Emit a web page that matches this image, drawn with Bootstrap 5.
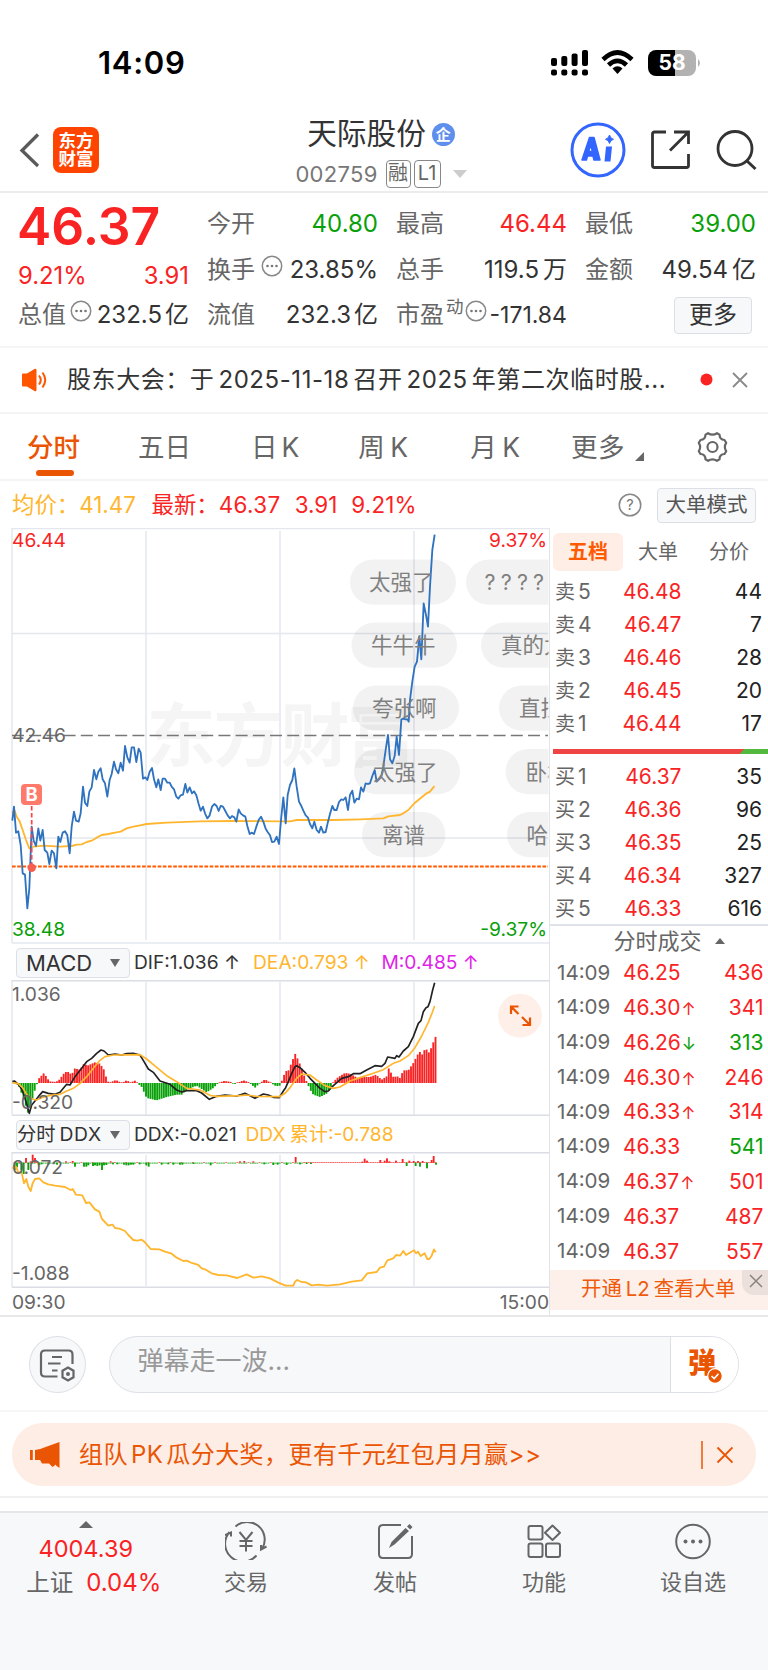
<!DOCTYPE html>
<html lang="zh-CN">
<head>
<meta charset="utf-8">
<meta name="viewport" content="width=device-width, initial-scale=1">
<title>天际股份 002759</title>
<link href="https://cdn.jsdelivr.net/npm/bootstrap@5.3.0/dist/css/bootstrap.min.css" rel="stylesheet">
<style>
:root{--up:#fa2323;--down:#09a009;--brand:#ea5504;--ink:#333;--dim:#666;--avg:#ffb62e}
body{font-family:Inter,"Noto Sans CJK SC",sans-serif;color:var(--ink);background:#fff;font-size:24px;line-height:1;width:768px;overflow-x:hidden}
svg{display:block;flex:none}
.up{color:var(--up)}.down{color:var(--down)}.dim{color:var(--dim)}.brand{color:var(--brand)}.avg{color:var(--avg)}
.statusbar{height:105px;padding:20px 67px 0 98px}
.clock{font-size:31px;font-weight:600;letter-spacing:.7px;color:#000}
.wifi{margin:0 14px 0 12px}
.batt{width:48px;height:26px;border-radius:8px;background:linear-gradient(90deg,#000 27px,#b2b2b2 27px);color:#fff;font-size:21px;font-weight:700;line-height:26px;text-align:center}
.topnav{height:88px;border-bottom:2px solid #ececee;display:grid;grid-template-columns:288px 186px 1fr;align-items:center}
.logo{width:46px;height:46px;border-radius:8px;background:#ff4400;color:#fff;font-weight:700;font-size:17.5px;line-height:18px;text-align:center;padding-top:5px;margin-left:13px}
.title-col{padding-top:9px}
.title-col>div{height:40px}
.stock-name{font-size:29.7px}
.corp{width:23px;height:23px;border-radius:50%;background:#5f8fec;color:#fff;font-size:15px;font-weight:700;line-height:23px;text-align:center;margin-left:6px}
.code{font-size:22px;color:#777;letter-spacing:.3px}
.tagbox{border:1.5px solid #888;border-radius:4px;height:28px;line-height:25px;font-size:20px;text-align:center;color:#666}
.quote{height:155px;border-bottom:2px solid #f5f5f7;padding:.5px 12px 0 18px;display:grid;grid-template-columns:repeat(4,171px);column-gap:18px}
.qcol{padding-top:7.5px}
.qrow{height:45.7px;display:flex;align-items:center;justify-content:space-between;white-space:nowrap}
.bigprice{font-size:51.5px;font-weight:600;height:64px;line-height:64px;margin-left:-1px}
.morebtn{width:78px;height:37px;border:1.5px solid #dcdfe6;border-radius:4px;background:#f7f8fa;font-size:24px;line-height:34px;text-align:center}
.notice{height:66px;border-bottom:2px solid #f4f4f6;padding:0 20px 0 22px}
.chart-tabs{height:67px;border-bottom:2px solid #f4f4f6;font-size:26.5px;color:var(--dim);padding:1px 40px 0 27px}
.chart-tabs .on{color:var(--brand);font-weight:500;position:relative}
.chart-tabs .on::after{content:"";position:absolute;left:9px;width:38px;height:6px;border-radius:3px;background:var(--brand);top:36px}
.avgrow{height:47px;font-size:22.4px;padding:1px 12px 0;white-space:nowrap}
.modebtn{width:99px;height:35px;border:1.5px solid #dcdfe6;border-radius:4px;background:#f7f8fa;font-size:20.5px;line-height:32px;text-align:center;color:#555}
.left{width:549px}.right{width:219px;border-left:1.5px solid #e2e4ea;height:787px}
.board{height:787px}
.indbar{height:36px;padding:1.5px 0 0 16px;font-size:19.2px;white-space:nowrap}
.selbtn{width:114px;height:30px;border:1.5px solid #dcdfe6;border-radius:4px;background:#f7f8fa;padding-right:9px}
.tri-d{width:0;height:0;border:5px solid transparent;border-top:8px solid #666;border-bottom:0}
.times{height:27px;font-size:19.2px;color:var(--dim);padding:2px 0 0 12px}
.bktabs{height:46px;font-size:20px;padding:5px 0 0 3px;color:var(--dim);line-height:38px}
.bktabs .on{width:70px;height:38px;background:#ffeee6;color:#ff5a00;font-weight:700;border-radius:6px;text-align:center}
.lv{height:32.9px;display:grid;grid-template-columns:58px 68.5px 1fr;align-items:center;padding:0 6px 0 5px;font-size:21px;color:#222;white-space:nowrap}
.lv>:first-child{color:var(--dim);font-size:20px}
.lv>:nth-child(2),.lv>:nth-child(3){text-align:right}
.ratio{height:5px;margin:9.5px 5px 6.5px 3px;background:linear-gradient(135deg,#ee4444 0 135px,#52b83e 135.5px)}
.dealhead{height:31.5px;border-top:2px solid #dfe2e8;margin-top:-1px;font-size:22px;color:var(--dim);padding-left:20px}
.deal{height:34.8px;display:grid;grid-template-columns:66px 1fr auto;align-items:center;padding:0 4.5px 0 7px;font-size:21px}
.deal>:first-child{color:var(--dim);font-size:20.6px}
.arw{font-size:17px;margin-left:1px}
.l2{height:40px;background:#fdf0ea;color:#f05a0c;font-size:20.4px;position:relative;line-height:37px;padding-left:31px;margin-top:1px;white-space:nowrap}
.l2 b{position:absolute;right:0;top:0;width:26px;height:25px;background:#ebe0db;border-bottom-left-radius:12px}
.chatrow{height:97px;border-top:2px solid #e8e8ea;border-bottom:2px solid #f6f6f7;padding:2px 29px 0}
.roundbtn{width:57px;height:57px;border:1.5px solid #dcdfe6;border-radius:50%;background:#f7f8fa}
.chatbox{width:630px;height:57px;border:1.5px solid #dcdfe6;border-radius:29px;overflow:hidden;background:#f7f8fa;margin-left:23.5px}
.chatbox .ph{flex:1;padding-left:27px;font-size:26px;color:#999;padding-bottom:7px}
.chatbox .dm{width:68px;background:#fff;border-left:1.5px solid #dcdfe6;position:relative}
.dmword{font-size:28px;font-weight:900;color:var(--brand);position:absolute;left:17px;top:12px}
.promo{height:62.5px;margin:11px 12px 10.5px;border-radius:31px;background:#feede5;color:var(--brand);padding:1px 23px 0 18px;font-size:24px}
.gapbar{height:16.5px;border-top:2px solid #f0f0f1;border-bottom:2px solid #e4e6e9}
.tabbar{background:#f7f8fa;height:158.5px;font-size:22px;color:var(--dim)}
.tabbar .cell{width:149px;padding-top:9.5px;line-height:44px}
.tabbar .idx{width:171.5px;padding-top:8px;line-height:34px;font-size:23.5px}
</style>
<script src="https://cdn.jsdelivr.net/npm/bootstrap@5.3.0/dist/js/bootstrap.bundle.min.js"></script>
</head>
<body>
<div class="statusbar d-flex align-items-center justify-content-between">
  <span class="clock">14:09</span>
  <div class="d-flex align-items-center">
    <svg width="38" height="26" viewBox="0 0 38 26"><g fill="#000"><rect x="0" y="8" width="6" height="8" rx="2"/><rect x="10.3" y="6" width="6" height="10" rx="2"/><rect x="20.6" y="3.5" width="6" height="12.5" rx="2"/><rect x="31" y="0" width="6" height="16" rx="2"/><rect x="0" y="19.500" width="6" height="6" rx="2"/><rect x="10.3" y="19.500" width="6" height="6" rx="2"/><rect x="20.600" y="19.500" width="6" height="6" rx="2"/><rect x="31" y="19.500" width="6" height="6" rx="2"/></g></svg>
    <svg class="wifi" width="33" height="25" viewBox="0 0 33 25"><g fill="none" stroke="#000" stroke-width="4.600"><path d="M2 9.500Q16.500-4.500 31 9.500"/><path d="M7.500 15Q16.500 6.600 25.500 15"/></g><path d="M11.500 18.500Q16.500 14 21.500 18.500L16.500 24Z"/></svg>
    <div class="batt">58</div>
    <svg width="5" height="10" viewBox="0 0 5 10"><path d="M2 1Q6 5 2 9Z" fill="#b2b2b2"/></svg>
  </div>
</div>

<header class="topnav">
  <div class="d-flex align-items-center">
    <svg style="margin-left:18px" width="22" height="36" viewBox="0 0 22 36"><path d="M20 2.500L4 18.500L20 34" fill="none" stroke="#5a5a5a" stroke-width="3.300"/></svg>
    <div class="logo">东方<br>财富</div>
  </div>
  <div class="title-col">
    <div class="d-flex align-items-center justify-content-center"><span class="stock-name">天际股份</span><span class="corp">企</span></div>
    <div class="d-flex align-items-center justify-content-center"><span class="code">002759</span><span class="tagbox" style="width:25px;margin-left:8px">融</span><span class="tagbox" style="width:27px;margin-left:3px">L1</span><svg style="margin-left:12px" width="14" height="8" viewBox="0 0 14 8"><path d="M0 0H14L7 8Z" fill="#ccc"/></svg></div>
  </div>
  <div class="d-flex align-items-center justify-content-end" style="padding-right:9px">
    <svg width="56" height="56" viewBox="0 0 56 56"><circle cx="28" cy="28" r="26" fill="none" stroke="#3366ff" stroke-width="3"/><path d="M12 38L19.500 15.500H24L30 38H24L23 34H17.500L16.400 38ZM18.700 29.500H22.300L20.800 22.500Z" fill="#3366ff" stroke="#3366ff" stroke-width="1.500" stroke-linejoin="round" fill-rule="evenodd"/><path d="M36 24.500H42L40.500 39.500H34.500Z" fill="#3366ff"/><path d="M39.500 13Q40.300 16.500 43.500 17.300Q40.300 18 39.500 21.500Q38.700 18 35.500 17.300Q38.700 16.500 39.500 13Z" fill="#3366ff" stroke="#3366ff"/></svg>
    <svg style="margin-left:24px" width="42" height="42" viewBox="0 0 42 42"><path d="M16 3H4.500Q2.500 3 2.500 5V36.500Q2.500 38.500 4.500 38.500H36.500Q38.500 38.500 38.500 36.500V25M24 3H38.500V15M38.500 3L20 21.500" fill="none" stroke="#333" stroke-width="2.800"/></svg>
    <svg style="margin-left:24px" width="43" height="42" viewBox="0 0 43 42"><circle cx="19" cy="19.500" r="17" fill="none" stroke="#333" stroke-width="2.800"/><path d="M30.500 31.500L39.500 40" stroke="#333" stroke-width="3"/></svg>
  </div>
</header>

<section class="quote">
  <div>
    <div class="bigprice up">46.37</div>
    <div class="qrow up" style="height:36px;font-size:23.800px"><span>9.21%</span><span>3.91</span></div>
    <div class="qrow" style="height:43px"><span class="dim">总值</span><svg class="mb-2" width="22" height="22"><use href="#dots"/></svg><span>232.5<span style="margin-left:3px">亿</span></span></div>
  </div>
  <div class="qcol">
    <div class="qrow"><span class="dim">今开</span><span class="down">40.80</span></div>
    <div class="qrow"><span class="dim">换手</span><svg class="mb-2" width="22" height="22"><use href="#dots"/></svg><span>23.85%</span></div>
    <div class="qrow"><span class="dim">流值</span><span>232.3<span style="margin-left:3px">亿</span></span></div>
  </div>
  <div class="qcol">
    <div class="qrow"><span class="dim">最高</span><span class="up">46.44</span></div>
    <div class="qrow"><span class="dim">总手</span><span>119.5<span class="ms-1">万</span></span></div>
    <div class="qrow"><span class="dim">市盈</span><span class="dim pb-3" style="font-size:17.500px">动</span><svg class="mb-2" width="22" height="22"><use href="#dots"/></svg><span style="font-size:23px">-171.84</span></div>
  </div>
  <div class="qcol">
    <div class="qrow"><span class="dim">最低</span><span class="down">39.00</span></div>
    <div class="qrow"><span class="dim">金额</span><span>49.54<span class="ms-1">亿</span></span></div>
    <div class="qrow justify-content-end pe-1"><span class="morebtn">更多</span></div>
  </div>
</section>
<svg width="0" height="0" class="position-absolute"><defs><symbol id="dots" viewBox="0 0 22 22"><circle cx="11" cy="11" r="9.700" fill="none" stroke="#888" stroke-width="1.500"/><g fill="#777"><circle cx="6.500" cy="11" r="1.300"/><circle cx="11" cy="11" r="1.300"/><circle cx="15.500" cy="11" r="1.300"/></g></symbol></defs></svg>

<div class="notice d-flex align-items-center">
  <svg width="26" height="24" viewBox="0 0 26 24"><path d="M0 6.500Q0 5.500 1 5.500H5L12.500 1Q14.500 0 14.500 2V22Q14.500 24 12.500 23L5 18.500H1Q0 18.500 0 17.500Z" fill="#ff5500"/><path d="M17 7.500Q20.500 12 17 16.500M20.500 4.500Q26 12 20.500 19.500" fill="none" stroke="#ff5500" stroke-width="2"/></svg>
  <span style="margin-left:19px;letter-spacing:.57px;white-space:nowrap">股东大会：于<span class="mx-1">2025-11-18</span>召开<span class="mx-1">2025</span>年第二次临时股...</span>
  <svg class="ms-auto" width="48" height="16" viewBox="0 0 48 16"><circle cx="6.500" cy="7.500" r="6" fill="#fa2323"/><path d="M33 1L47 15M47 1L33 15" stroke="#8a8a8a" stroke-width="1.800"/></svg>
</div>

<nav class="chart-tabs d-flex align-items-center">
  <span class="on">分时</span><span style="margin-left:58px">五日</span><span style="margin-left:60px">日<span class="ms-1">K</span></span><span style="margin-left:59px">周<span style="margin-left:5.500px">K</span></span><span style="margin-left:62px">月<span style="margin-left:5.500px">K</span></span><span style="margin-left:51px;letter-spacing:.5px">更多</span>
  <svg style="margin-left:10px;margin-top:19px" width="9" height="9"><path d="M9 0V9H0Z" fill="#666"/></svg>
  <svg class="ms-auto" width="31" height="32" viewBox="0 0 31 32"><path d="M11 2.200Q15.500 5 20 2.200L22.500 3.600Q22.500 8.800 27.500 9L29.200 11.800Q26.500 16 29.200 20.200L27.500 23Q22.500 23.200 22.500 28.400L20 29.800Q15.500 27 11 29.800L8.500 28.400Q8.500 23.200 3.500 23L1.800 20.200Q4.500 16 1.800 11.800L3.500 9Q8.500 8.800 8.500 3.600Z" fill="none" stroke="#666" stroke-width="2.200" stroke-linejoin="round"/><circle cx="15.500" cy="16" r="5" fill="none" stroke="#666" stroke-width="2.200"/></svg>
</nav>

<div class="avgrow d-flex align-items-center">
  <span class="avg" style="width:139.500px">均价：41.47</span><span class="up">最新：<span style="letter-spacing:.4px">46.37</span></span><span class="up" style="margin-left:14px">3.91</span><span class="up" style="margin-left:14px;letter-spacing:.2px">9.21%</span>
  <svg class="ms-auto" width="24" height="24" viewBox="0 0 24 24"><circle cx="12" cy="12" r="10.700" fill="none" stroke="#888" stroke-width="1.600"/><text x="12" y="17" font-size="14.500" text-anchor="middle" fill="#777">?</text></svg>
  <span class="modebtn" style="margin-left:15px">大单模式</span>
</div>

<main class="board d-flex">
  <div class="left">
    <svg width="549" height="416" viewBox="0 528 549 416">
      <defs><clipPath id="plot"><rect x="12" y="528" width="536.500" height="415"/></clipPath></defs>
      <g font-size="69" font-weight="700" fill="#f5f5f6" text-anchor="middle"><text x="181" y="761">东</text><text x="248" y="761">方</text><text x="315" y="761">财</text><text x="381" y="761">富</text></g>
      <g fill="none" stroke="#e4e7ee" stroke-width="1.500"><path d="M12 528.500H549M12 528V943M12 943H549"/><path d="M12 633.500H548M12 838H548M146 531V940M280 531V940M414 531V940"/></g>
      <path d="M12 735.500H548" stroke="#777" stroke-width="1.300" stroke-dasharray="12 5.200"/>
      <path d="M12 866.500H548" stroke="#ff5a00" stroke-width="2" stroke-dasharray="3.700 1.500"/>
      <g id="pills" clip-path="url(#plot)"></g>
      <g transform="translate(0 520) scale(.33333)" fill="none" stroke-linejoin="round">
        <polyline stroke="#ffb62e" stroke-width="5.500" points="37,880 43,870 50,890 58,902 68,930 78,960 88,985 100,980 130,977 180,980 215,978 230,974 245,973 260,966 275,962 290,953 305,945 325,942 345,938 362,935 380,925 400,920 420,916 440,912 500,908 600,904 700,903 840,904 870,904 890,900 1000,900 1080,898 1150,895 1165,889 1200,885 1210,880 1225,870 1245,848 1265,832 1280,820 1290,815 1300,802 1304,799"/>
        <polyline stroke="#2f72bf" stroke-width="5.500" points="37,902 42,860 48,938 55,934 62,975 68,1060 75,1064 82,1165 88,1105 95,920 101,962 108,978 115,925 121,962 128,930 134,990 142,998 148,1032 155,992 162,1000 169,1045 175,950 181,966 188,938 195,934 202,946 209,1000 215,920 222,875 228,902 236,905 242,880 249,800 255,848 262,858 268,815 275,802 282,750 289,778 295,755 302,745 308,778 315,790 322,830 329,780 335,762 342,725 348,748 355,760 362,728 369,752 375,678 382,712 389,728 395,682 402,682 409,726 416,686 422,698 429,776 436,772 442,780 449,755 456,744 462,778 469,802 475,778 482,810 488,776 495,776 502,788 509,788 515,800 522,808 529,830 535,836 542,826 549,824 556,792 562,818 569,802 576,820 582,814 589,826 596,852 602,872 609,860 615,880 622,895 629,886 636,860 643,852 650,858 656,873 662,858 669,860 676,873 683,886 690,895 696,888 703,892 709,905 716,868 722,880 729,886 736,890 742,918 749,942 756,938 762,942 769,920 776,900 783,890 790,905 797,926 803,936 810,946 816,966 823,965 830,950 837,972 843,900 850,832 857,910 863,825 870,795 877,780 883,745 890,800 897,845 904,858 910,872 917,886 924,893 930,912 937,925 943,905 950,930 957,938 963,920 970,938 977,936 984,905 990,882 997,858 1003,870 1010,870 1017,846 1024,838 1030,840 1037,832 1044,870 1050,825 1057,812 1063,848 1070,836 1077,838 1083,802 1090,815 1097,790 1103,792 1110,790 1117,768 1124,750 1130,785 1137,778 1144,770 1150,740 1157,690 1164,645 1170,718 1177,730 1184,708 1190,650 1197,705 1204,598 1210,596 1217,598 1223,598 1226,605 1230,540 1237,485 1244,440 1251,425 1258,350 1264,418 1271,250 1278,285 1284,320 1290,200 1297,90 1304,44"/>
      </g>
      <path d="M31.700 806V864" stroke="#f44" stroke-width="1.700" stroke-dasharray="4.500 2.500"/><circle cx="31.700" cy="867.800" r="4.200" fill="#f55f50"/>
      <rect x="21" y="784" width="21" height="21" rx="4" fill="#ff7a6b"/><text x="31.500" y="801.300" font-size="18.500" font-weight="700" fill="#fff" text-anchor="middle">B</text>
      <g id="pillText" clip-path="url(#plot)" font-size="21.500" fill="#808080"></g>
      <g font-size="19.200"><text x="12" y="547.300" fill="#fa2323">46.44</text><text x="547" y="547.300" fill="#fa2323" text-anchor="end">9.37%</text><text x="12" y="742" fill="#666">42.46</text><text x="12" y="936" fill="#09a009">38.48</text><text x="547" y="936" fill="#09a009" text-anchor="end">-9.37%</text></g>
    </svg>
    <div class="indbar d-flex align-items-center">
      <div class="selbtn d-flex align-items-center justify-content-between"><span style="font-size:22px;margin-left:9px">MACD</span><i class="tri-d"></i></div>
      <span style="margin-left:4px;width:119px">DIF:1.036 ↑</span><span class="avg" style="width:128.500px">DEA:0.793 ↑</span><span style="color:#e01fe8">M:0.485 ↑</span>
    </div>
    <svg width="549" height="136" viewBox="0 980 549 136">
      <g fill="none" stroke="#e4e7ee" stroke-width="1.500"><path d="M12 980V1115M146 982V1115M280 982V1115M414 982V1115"/><path stroke="#dadde3" d="M12 980.700H549M12 1115.300H549"/></g>
      <g transform="translate(0 935) scale(.33333)" fill="none" stroke-linejoin="round">
        <g id="macdBars"></g>
        <polyline stroke="#222" stroke-width="5" points="37,440 43,438 55,448 65,462 75,490 88,535 95,510 105,498 115,485 128,470 145,475 165,478 180,472 200,448 210,450 225,425 245,400 260,380 275,370 290,355 303,345 312,348 325,360 345,357 365,360 380,356 400,355 420,360 432,380 445,402 460,412 480,438 510,448 530,465 545,471 560,467 590,467 605,474 628,493 650,484 675,480 710,483 735,475 750,482 765,490 790,477 805,480 820,487 838,488 850,468 857,458 865,440 875,415 885,395 890,392 900,398 915,412 930,430 945,445 960,460 975,470 985,468 1000,452 1025,430 1045,425 1060,416 1080,416 1100,405 1125,392 1145,394 1155,385 1163,366 1185,370 1190,362 1197,366 1210,348 1225,335 1240,305 1255,265 1263,257 1270,230 1278,218 1284,215 1290,200 1298,165 1304,143"/>
        <polyline stroke="#ffb62e" stroke-width="5" points="37,443 55,446 68,458 80,478 95,492 110,495 125,488 150,481 180,478 200,468 220,460 240,445 260,425 280,400 300,376 315,365 340,360 420,359 440,372 470,397 500,422 530,440 560,460 600,465 630,481 650,484 720,482 740,480 770,484 838,485 855,475 870,458 890,430 905,417 930,420 950,435 975,452 1000,460 1020,456 1050,438 1080,428 1120,415 1150,404 1180,385 1200,378 1225,362 1245,338 1265,303 1285,262 1297,232 1304,213"/>
      </g>
      <g font-size="19.200" fill="#666"><text x="12" y="1001">1.036</text><text x="12" y="1108.500">-0.320</text></g>
      <circle cx="520" cy="1015.700" r="22" fill="#feefe8"/><path d="M511 1014V1006.500H518.500M511.500 1007L518.500 1014M530 1017.500V1025H522.500M529.500 1024.500L522 1017" fill="none" stroke="#ea5504" stroke-width="2.200"/>
    </svg>
    <div class="indbar d-flex align-items-center">
      <div class="selbtn d-flex align-items-center justify-content-between"><span style="font-size:19.300px">分时<span style="margin-left:4px;letter-spacing:.6px">DDX</span></span><i class="tri-d"></i></div>
      <span style="margin-left:4px;width:111.500px">DDX:-0.021</span><span class="avg">DDX<span style="margin-left:4px">累计</span>:-0.788</span>
    </div>
    <svg width="549" height="136" viewBox="0 1152 549 136">
      <g fill="none" stroke="#e4e7ee" stroke-width="1.500"><path d="M12 1152V1287M146 1155V1286M280 1155V1286M414 1155V1286"/><path stroke="#dadde3" d="M12 1152.700H549M12 1287.300H549"/></g>
      <g transform="translate(0 935) scale(.33333)" fill="none" stroke-linejoin="round">
        <g id="ddxBars"></g>
        <polyline stroke="#ffb62e" stroke-width="5.500" points="37,700 48,695 55,712 65,712 72,745 79,732 85,755 92,768 98,745 105,732 118,730 130,742 145,748 165,752 195,756 212,765 218,762 228,779 247,781 258,804 268,802 285,823 298,830 306,852 325,872 338,869 345,879 358,881 375,888 385,900 400,915 412,917 425,914 435,922 452,942 478,943 495,950 515,956 530,968 550,978 560,977 575,984 595,990 605,1000 615,1003 635,1015 655,1020 680,1021 712,1029 740,1018 760,1028 785,1024 810,1030 835,1043 857,1052 880,1052 885,1040 892,1035 905,1041 918,1042 935,1051 955,1049 980,1052 1020,1048 1055,1040 1085,1036 1102,1015 1130,1011 1140,998 1152,995 1162,976 1180,970 1188,960 1200,962 1210,948 1218,960 1242,946 1248,955 1254,950 1262,963 1274,955 1282,972 1288,972 1295,962 1302,943 1307,952"/>
      </g>
      <g font-size="19.200" fill="#666"><text x="12" y="1174">0.072</text><text x="12" y="1280">-1.088</text></g>
    </svg>
    <div class="times d-flex align-items-center justify-content-between"><span>09:30</span><span>15:00</span></div>
  </div>

  <aside class="right">
    <div class="bktabs d-flex"><span class="on">五档</span><span style="margin-left:15px">大单</span><span style="margin-left:31px">分价</span></div>
    <div style="padding-top:1px">
      <div id="asks"></div>
      <div class="ratio"></div>
      <div id="bids"></div>
    </div>
    <div class="dealhead d-flex align-items-center justify-content-center">分时成交<svg style="margin-left:13px" width="10" height="6"><path d="M5 0L10 6H0Z" fill="#666"/></svg></div>
    <div id="deals"></div>
    <div class="l2">开通<span class="mx-1">L2</span>查看大单<b><svg width="26" height="25"><path d="M8 5L20 17M20 5L8 17" stroke="#8a8480" stroke-width="1.500"/></svg></b></div>
  </aside>
</main>

<div class="chatrow d-flex align-items-center">
  <div class="roundbtn d-flex align-items-center justify-content-center"><svg width="36" height="36" viewBox="0 0 36 36"><g fill="none" stroke="#666" stroke-width="2.200"><path d="M18.500 29.500H6Q2 29.500 2 25.500V7.500Q2 3.500 6 3.500H29.500Q33.500 3.500 33.500 7.500V17M13 10H23M9 16.500H21.500M13 23.500H18.500"/><path d="M29 20.500L34.500 23.700V30.300L29 33.500L23.500 30.300V23.700Z"/></g><circle cx="29" cy="27" r="2" fill="#666"/></svg></div>
  <div class="chatbox d-flex">
    <div class="ph d-flex align-items-center">弹幕走一波...</div>
    <div class="dm"><span class="dmword">弹</span><svg class="position-absolute" style="left:36px;top:31px" width="16" height="16" viewBox="0 0 16 16"><circle cx="8" cy="8" r="7.300" fill="#ea5504" stroke="#fff" stroke-width="1.200"/><path d="M4.500 8L7.200 10.600L11.500 5.800" fill="none" stroke="#fff" stroke-width="1.600"/></svg></div>
  </div>
</div>

<div class="promo d-flex align-items-center">
  <svg width="31" height="26" viewBox="0 0 31 26"><g fill="#ea5504"><rect x="0" y="8" width="2.800" height="10"/><path d="M5 8Q10 7.500 17 4.500L29.500 0V26L26 23.500V22.500L22.500 25L19 21.500H12L10 18H5Z"/></g></svg>
  <span style="margin-left:18px;letter-spacing:.45px">组队<span style="margin:0 3px">PK</span>瓜分大奖，更有千元红包月月赢&gt;&gt;</span>
  <svg class="ms-auto" width="32" height="30" viewBox="0 0 32 30"><path d="M1 1V29" stroke="#ea5504" stroke-width="1.500"/><path d="M16.500 7.500L31.500 22.500M31.500 7.500L16.500 22.500" stroke="#ea5504" stroke-width="1.900"/></svg>
</div>

<div class="gapbar"></div>

<footer class="tabbar d-flex">
  <div class="idx d-flex flex-column align-items-center">
    <svg width="14" height="7"><path d="M7 0L14 7H0Z" fill="#666"/></svg>
    <span class="up" style="margin-top:4.500px">4004.39</span>
    <span class="text-nowrap" style="padding-left:16px">上证<span class="up" style="margin-left:13px;font-size:24px">0.04%</span></span>
  </div>
  <div class="cell d-flex flex-column align-items-center">
    <svg width="42" height="38" viewBox="0 0 42 38"><g fill="none" stroke="#666" stroke-width="2"><path d="M10.500 4.500A17.500 17.500 0 0 1 37.500 26M31.500 33.500A17.500 17.500 0 0 1 4.500 10M0 13L6 10.500V14.500M41.500 24.500L36 27.500V23"/><path d="M14.500 10L21 18L27.500 10M21 18V29.500M14.500 19H27.500M14.500 24H27.500"/></g></svg>
    <span>交易</span>
  </div>
  <div class="cell d-flex flex-column align-items-center">
    <svg width="36" height="38" viewBox="0 0 36 38"><path d="M24 3H6Q2 3 2 7V32Q2 36 6 36H31Q35 36 35 32V14" fill="none" stroke="#666" stroke-width="2"/><path d="M28.500 6L32 9L17.500 22.500L12 26L14.500 20Z M30 4.500L32.500 2L35.500 5L33.200 7.500Z" fill="#666"/></svg>
    <span>发帖</span>
  </div>
  <div class="cell d-flex flex-column align-items-center">
    <svg width="34" height="38" viewBox="0 0 34 38"><g fill="none" stroke="#666" stroke-width="2"><rect x="1.500" y="4" width="14" height="13.500" rx="2"/><rect x="1.500" y="21.500" width="14" height="13.500" rx="2"/><rect x="19" y="21.500" width="14" height="13.500" rx="2"/><path d="M25.500 3.500L33 10.800L25.500 18L18 10.800Z" stroke-linejoin="round"/></g></svg>
    <span>功能</span>
  </div>
  <div class="cell d-flex flex-column align-items-center">
    <svg width="38" height="38" viewBox="0 0 38 38"><circle cx="19" cy="19.500" r="16.800" fill="none" stroke="#666" stroke-width="2"/><g fill="#666"><circle cx="11.500" cy="19.500" r="2"/><circle cx="19" cy="19.500" r="2"/><circle cx="26.500" cy="19.500" r="2"/></g></svg>
    <span>设自选</span>
  </div>
</footer>

<script>
const el = id => document.getElementById(id);

// Order book levels: label, level number, price, volume
const level = ([s, n, p, v]) => `<div class="lv"><span>${s}<span style="margin-left:3px;font-size:21px">${n}</span></span><span class="up">${p}</span><span>${v}</span></div>`;
el('asks').innerHTML = [['卖',5,'46.48',44],['卖',4,'46.47',7],['卖',3,'46.46',28],['卖',2,'46.45',20],['卖',1,'46.44',17]].map(level).join('');
el('bids').innerHTML = [['买',1,'46.37',35],['买',2,'46.36',96],['买',3,'46.35',25],['买',4,'46.34',327],['买',5,'46.33',616]].map(level).join('');

// Tick-by-tick trades: price, direction, volume, volume colour
const arrow = {u:'<span class="arw up">↑</span>', d:'<span class="arw down">↓</span>', '':''};
el('deals').innerHTML = [['46.25','',436,'up'],['46.30','u',341,'up'],['46.26','d',313,'down'],['46.30','u',246,'up'],['46.33','u',314,'up'],['46.33','',541,'down'],['46.37','u',501,'up'],['46.37','',487,'up'],['46.37','',557,'up']]
  .map(([p,a,v,c]) => `<div class="deal"><span>14:09</span><span class="up">${p}${arrow[a]}</span><span class="${c}">${v}</span></div>`).join('');

// Floating viewer comments: pill left, right, top, text start, text, tracking
const pills = [[350,456,559.5,369,'太强了',0],[466,620,559.5,484.5,'????',5.2],[351.5,457,622.5,371,'牛牛牛',0],[481,640,622.5,501,'真的太',0],[353,459,685.5,372,'夸张啊',0],[499,640,685.5,519,'直拉',0],[354,460,749,373,'太强了',0],[505.5,640,749,525.5,'卧槽',0],[362,445.5,812,382,'离谱',0],[507,640,812,526.5,'哈哈',0]];
el('pills').innerHTML = pills.map(([l,r,t]) => `<rect x="${l}" y="${t}" width="${r-l}" height="45.3" rx="22.6" fill="#000" fill-opacity=".05"/>`).join('');
el('pillText').innerHTML = pills.map(([l,r,t,x,s,k]) => `<text x="${x}" y="${t+30.5}" letter-spacing="${k}">${s}</text>`).join('');

// MACD histogram, interpolated between key values
const keys = [[37,0],[55,-5],[70,-45],[85,-92],[95,-55],[105,-20],[112,0],[117,14],[132,30],[148,5],[168,3],[178,10],[195,33],[208,33],[215,22],[222,44],[240,40],[252,58],[262,52],[285,62],[300,58],[312,40],[322,5],[330,2],[348,9],[365,0],[380,8],[392,2],[405,7],[415,-3],[425,-12],[440,-45],[470,-52],[500,-42],[530,-35],[545,-35],[560,-20],[590,-8],[620,-28],[640,-15],[655,0],[672,6],[690,4],[705,-3],[730,8],[745,3],[765,-14],[780,0],[795,11],[810,2],[825,-8],[838,-10],[848,12],[856,35],[866,38],[876,65],[886,88],[894,70],[905,45],[915,14],[922,0],[930,-20],[940,-35],[960,-42],[980,-32],[995,-8],[1000,4],[1015,18],[1035,30],[1050,28],[1075,14],[1090,18],[1110,18],[1128,25],[1145,10],[1160,20],[1166,44],[1180,18],[1192,20],[1200,15],[1210,38],[1225,38],[1240,60],[1258,95],[1267,85],[1276,105],[1288,90],[1297,115],[1308,142]];
const at = x => { const i = keys.findIndex(k => k[0] >= x), a = keys[Math.max(i-1,0)], b = keys[i]; return a === b ? a[1] : a[1] + (b[1]-a[1])*(x-a[0])/(b[0]-a[0]); };
const bar = (x, h, zero) => `<rect x="${x-2.8}" y="${h>0?zero-Math.max(h,2):zero}" width="5.6" height="${Math.max(Math.abs(h),2)}" fill="${h>0?'#fa2323':'#09a009'}"/>`;
let out = '';
for (let x = 44; x < 1308; x += 6.68) out += bar(x, at(x), 444);
el('macdBars').innerHTML = out;

// DDX histogram: spikes over a small base
const spikes = {44:-22,51:-14,58:4,64:-22,71:-34,78:14,85:-22,92:4,98:24,105:14,112:4,118:-8,125:-5,145:-6,171:-6,198:4,218:5,225:-12,252:-12,259:-12,265:-8,279:-10,285:-8,292:-10,299:-8,306:-22,312:-8,319:-7,332:4,339:-5,352:-5,372:-6,379:-8,386:-8,393:-6,400:-6,419:-5,439:-8,446:-12,485:-6,505:-5,520:-6,540:-6,547:-6,580:-4,632:-8,720:4,733:5,760:4,793:-5,820:-7,833:-6,860:-7,887:17,900:-5,920:-4,933:-4,1087:3,1094:12,1101:6,1141:8,1154:6,1161:13,1168:4,1188:6,1208:11,1220:-10,1228:6,1241:5,1247:-10,1254:5,1260:-12,1268:5,1281:-17,1295:8,1301:20,1308:-6};
out = '';
for (let i = 0; i < 190; i++) out += bar(44 + i*6.68, (i > 130 || i % 5 === 0) ? 2 : -2.5, 683);
for (const x in spikes) out += bar(+x, spikes[x], 683);
el('ddxBars').innerHTML = out;
</script>
</body>
</html>
